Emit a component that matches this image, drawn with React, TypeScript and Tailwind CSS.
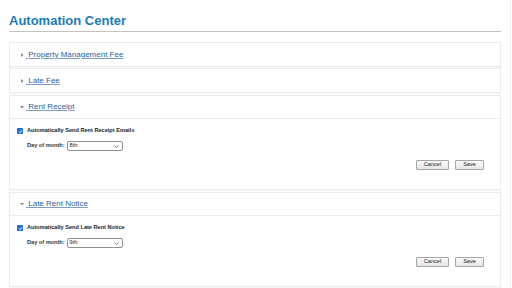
import React from "react";

function Caret({ open }: { open: boolean }) {
  return (
    <svg width="4" height="4" viewBox="0 0 4 4" className="mr-[2px] shrink-0">
      {open ? (
        <path d="M0 1 L4 1 L2 3.5 Z" fill="#8a8a8a" />
      ) : (
        <path d="M1 0 L3.5 2 L1 4 Z" fill="#8a8a8a" />
      )}
    </svg>
  );
}

function PanelHeader({ title, open }: { title: string; open: boolean }) {
  return (
    <div
      className={
        "flex h-[23px] items-center pl-[10px] " +
        (open ? "border-b border-[#ececec]" : "")
      }
    >
      <Caret open={open} />
      <a href="#" className="text-[8px] leading-none text-[#2d5f9c] underline decoration-[#7b9cc4]">
        &nbsp;{title}
      </a>
    </div>
  );
}

function Settings({ label, day }: { label: string; day: string }) {
  return (
    <div className="flex h-[70px] flex-col pl-[7px] pr-[16px] pt-[9px]">
      <div className="flex items-center">
        <span className="flex h-[6px] w-[6px] items-center justify-center rounded-[1px] bg-[#1a6fdf]">
          <svg width="5" height="5" viewBox="0 0 10 10">
            <path d="M2 5.2 L4.2 7.4 L8.2 2.6" stroke="white" strokeWidth="2" fill="none" />
          </svg>
        </span>
        <span className="ml-[4px] text-[5.6px] font-bold leading-none text-[#222]">{label}</span>
      </div>
      <div className="mt-[7px] flex items-center pl-[10px]">
        <span className="text-[5.6px] font-bold leading-none text-[#333]">Day of month:</span>
        <div className="ml-[2px] flex h-[10px] w-[56px] items-center justify-between rounded-[2px] border border-[#8f8f8f] bg-white pl-[2px] pr-[3px]">
          <span className="text-[5.6px] leading-none text-[#222]">{day}</span>
          <svg width="5" height="3" viewBox="0 0 5 3">
            <path d="M0.5 0.5 L2.5 2.5 L4.5 0.5" stroke="#555" strokeWidth="0.8" fill="none" />
          </svg>
        </div>
      </div>
      <div className="mt-[9px] flex justify-end gap-[6px]">
        <button className="h-[10px] w-[33px] rounded-[1px] border border-[#a6a6a6] bg-gradient-to-b from-[#fafafa] to-[#e6e6e6] text-[5.6px] leading-none text-[#222]">
          Cancel
        </button>
        <button className="h-[10px] w-[29px] rounded-[1px] border border-[#a6a6a6] bg-gradient-to-b from-[#fafafa] to-[#e6e6e6] text-[5.6px] leading-none text-[#222]">
          Save
        </button>
      </div>
    </div>
  );
}

export default function App() {
  return (
    <div className="h-[288px] w-[512px] overflow-hidden bg-white font-['Liberation_Sans',Arial,sans-serif]">
      <div className="h-full w-[511px] border-r border-[#eeeeee] pl-[9px] pr-[9px] pt-[13px]">
        <h1 className="border-b border-[#c2c2c2] pb-[2px] text-[13px] font-bold leading-[16px] text-[#1b7bb8]">
          Automation Center
        </h1>
        <div className="mt-[10px] flex flex-col">
          <div className="mb-[1px] border border-[#ececec] shadow-[0_1px_1px_rgba(0,0,0,0.03)]">
            <PanelHeader title="Property Management Fee" open={false} />
          </div>
          <div className="mb-[2px] border border-[#ececec] shadow-[0_1px_1px_rgba(0,0,0,0.03)]">
            <PanelHeader title="Late Fee" open={false} />
          </div>
          <div className="mb-[2px] border border-[#ececec] shadow-[0_1px_1px_rgba(0,0,0,0.03)]">
            <PanelHeader title="Rent Receipt" open={true} />
            <Settings label="Automatically Send Rent Receipt Emails" day="8th" />
          </div>
          <div className="border border-[#ececec] shadow-[0_1px_1px_rgba(0,0,0,0.03)]">
            <PanelHeader title="Late Rent Notice" open={true} />
            <Settings label="Automatically Send Late Rent Notice" day="9th" />
          </div>
        </div>
      </div>
    </div>
  );
}
